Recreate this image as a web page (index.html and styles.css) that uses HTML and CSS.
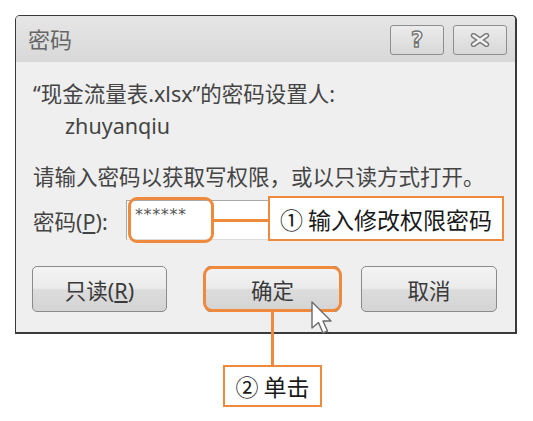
FILE: index.html
```html
<!DOCTYPE html>
<html lang="zh-CN">
<head>
    <meta charset="UTF-8">
    <meta name="viewport" content="width=device-width, initial-scale=1.0">
    <title>密码</title>
    <link rel="stylesheet" href="styles.css">
</head>
<body>
    <div class="dialog">
        <div class="titlebar">
            <span class="title">密码</span>
            <div class="caption-buttons">
                <span class="cap-btn"><span class="cap-help">?</span></span>
                <span class="cap-btn">
                    <svg width="20" height="14" viewBox="0 0 20 14">
                        <path d="M3.5 2.5 L16.5 11.5 M16.5 2.5 L3.5 11.5" stroke="#7a7a7a" stroke-width="5.5" stroke-linecap="round"/>
                        <path d="M3.5 2.5 L16.5 11.5 M16.5 2.5 L3.5 11.5" stroke="#f2f2f2" stroke-width="2.6" stroke-linecap="round"/>
                    </svg>
                </span>
            </div>
        </div>

        <div class="content">
            <p class="line first">“现金流量表.xlsx”的密码设置人:</p>
            <p class="line owner">zhuyanqiu</p>
            <p class="line prompt">请输入密码以获取写权限，或以只读方式打开。</p>

            <div class="pw-row">
                <span class="pw-label">密码(<u>P</u>):</span>
                <div class="pw-input">
                    <span class="pw-value">******</span>
                    <span class="ring ring-input"></span>
                    <span class="connector"></span>
                    <span class="callout callout-input">① 输入修改权限密码</span>
                </div>
            </div>

            <div class="actions">
                <button class="btn btn-readonly">只读(<u>R</u>)</button>
                <div class="btn-wrap">
                    <button class="btn btn-ok">确定</button>
                    <span class="ring ring-btn"></span>
                    <span class="drop-line"></span>
                </div>
                <button class="btn btn-cancel">取消</button>
            </div>
        </div>

        <svg class="cursor" width="22" height="34" viewBox="0 0 22 34">
            <path d="M1 1 L1 27 L7.5 21.5 L12 32 L16.5 30 L12 20 L20 20 Z" fill="#fff" stroke="#6a6a6a" stroke-width="1.4" stroke-linejoin="round"/>
        </svg>
    </div>

    <div class="callout callout-click">② 单击</div>
</body>
</html>
```

FILE: styles.css
```css
body {
    margin: 0;
    background: #fff;
    font-family: "Noto Sans", "Noto Sans CJK SC", sans-serif;
    width: 533px;
    height: 421px;
    overflow: hidden;
}
.dialog {
    position: relative;
    box-sizing: border-box;
    width: 502px;
    height: 319px;
    margin: 15px 0 0 15px;
    border: 1px solid #3a3a3a;
    border-right-width: 2px;
    border-bottom-width: 2px;
    border-radius: 5px 5px 0 0;
    background: #efefef;
}
.titlebar {
    height: 46px;
    display: flex;
    align-items: flex-start;
    justify-content: space-between;
    padding: 0 8px 0 12px;
    background: linear-gradient(#e6e6e6, #d8d8d8);
    border-radius: 4px 4px 0 0;
}
.title {
    font-size: 22px;
    line-height: 46px;
    color: #666;
}
.caption-buttons {
    display: flex;
    gap: 9px;
    margin-top: 9px;
}
.cap-btn {
    box-sizing: border-box;
    width: 54px;
    height: 30px;
    display: flex;
    align-items: center;
    justify-content: center;
    border: 1px solid #8e8e8e;
    border-radius: 3px;
    background: linear-gradient(#ececec, #d8d8d8);
}
.cap-help {
    font-family: "DejaVu Sans", sans-serif;
    font-weight: bold;
    font-size: 21px;
    line-height: 1;
    color: #f4f4f4;
    -webkit-text-stroke: 1.4px #777;
}
.content {
    padding: 0 0 0 17px;
}
.line {
    margin: 0;
    font-size: 21.5px;
    line-height: 32px;
    color: #444;
}
.first {
    margin-top: 16px;
}
.owner {
    padding-left: 32px;
}
.prompt {
    margin-top: 19px;
}
.pw-row {
    display: flex;
    align-items: center;
    margin-top: 7px;
    height: 40px;
}
.pw-label {
    width: 93px;
    font-size: 21.5px;
    color: #444;
}
.pw-input {
    position: relative;
    box-sizing: border-box;
    width: 376px;
    height: 40px;
    background: #fff;
    border: 1px solid #a9a9a9;
    border-bottom-color: #dcdcdc;
    padding: 2px 8px;
}
.pw-value {
    font-family: "DejaVu Sans", sans-serif;
    font-size: 16px;
    letter-spacing: 0.6px;
    color: #555;
}
.ring {
    position: absolute;
    box-sizing: border-box;
    border: 3px solid #ef8a3d;
    border-radius: 9px;
}
.ring-input {
    left: 1px;
    top: -4px;
    width: 86px;
    height: 46px;
}
.connector {
    position: absolute;
    left: 86px;
    top: 18px;
    width: 56px;
    height: 3px;
    background: #ef8a3d;
}
.callout {
    box-sizing: border-box;
    background: #fff;
    border: 2px solid #ef8a3d;
    color: #1a1a1a;
    font-family: "Noto Sans CJK SC", sans-serif;
    font-size: 23px;
    display: flex;
    align-items: center;
    justify-content: center;
}
.callout-input {
    position: absolute;
    left: 141px;
    top: -5px;
    width: 236px;
    height: 45px;
}
.actions {
    display: flex;
    margin-top: 26px;
    margin-left: -1px;
}
.btn {
    box-sizing: border-box;
    width: 135px;
    height: 46px;
    border: 1px solid #8a8a8a;
    border-radius: 5px;
    background: linear-gradient(#f3f3f3 0%, #ebebeb 48%, #dcdcdc 52%, #d4d4d4 100%);
    font-family: "Noto Sans", "Noto Sans CJK SC", sans-serif;
    font-size: 21.5px;
    color: #3a3a3a;
    padding: 0;
}
.btn-wrap {
    position: relative;
    margin-left: 38px;
}
.btn-ok {
    display: block;
}
.ring-btn {
    left: -2px;
    right: -2px;
    top: 0;
    bottom: 0;
}
.drop-line {
    position: absolute;
    left: 66px;
    top: 46px;
    width: 3px;
    height: 53px;
    background: #ef8a3d;
}
.btn-cancel {
    margin-left: 21px;
    width: 136px;
}
.cursor {
    position: absolute;
    left: 295px;
    top: 285px;
}
.callout-click {
    width: 99px;
    height: 42px;
    margin: 31px 0 0 223px;
}
```
